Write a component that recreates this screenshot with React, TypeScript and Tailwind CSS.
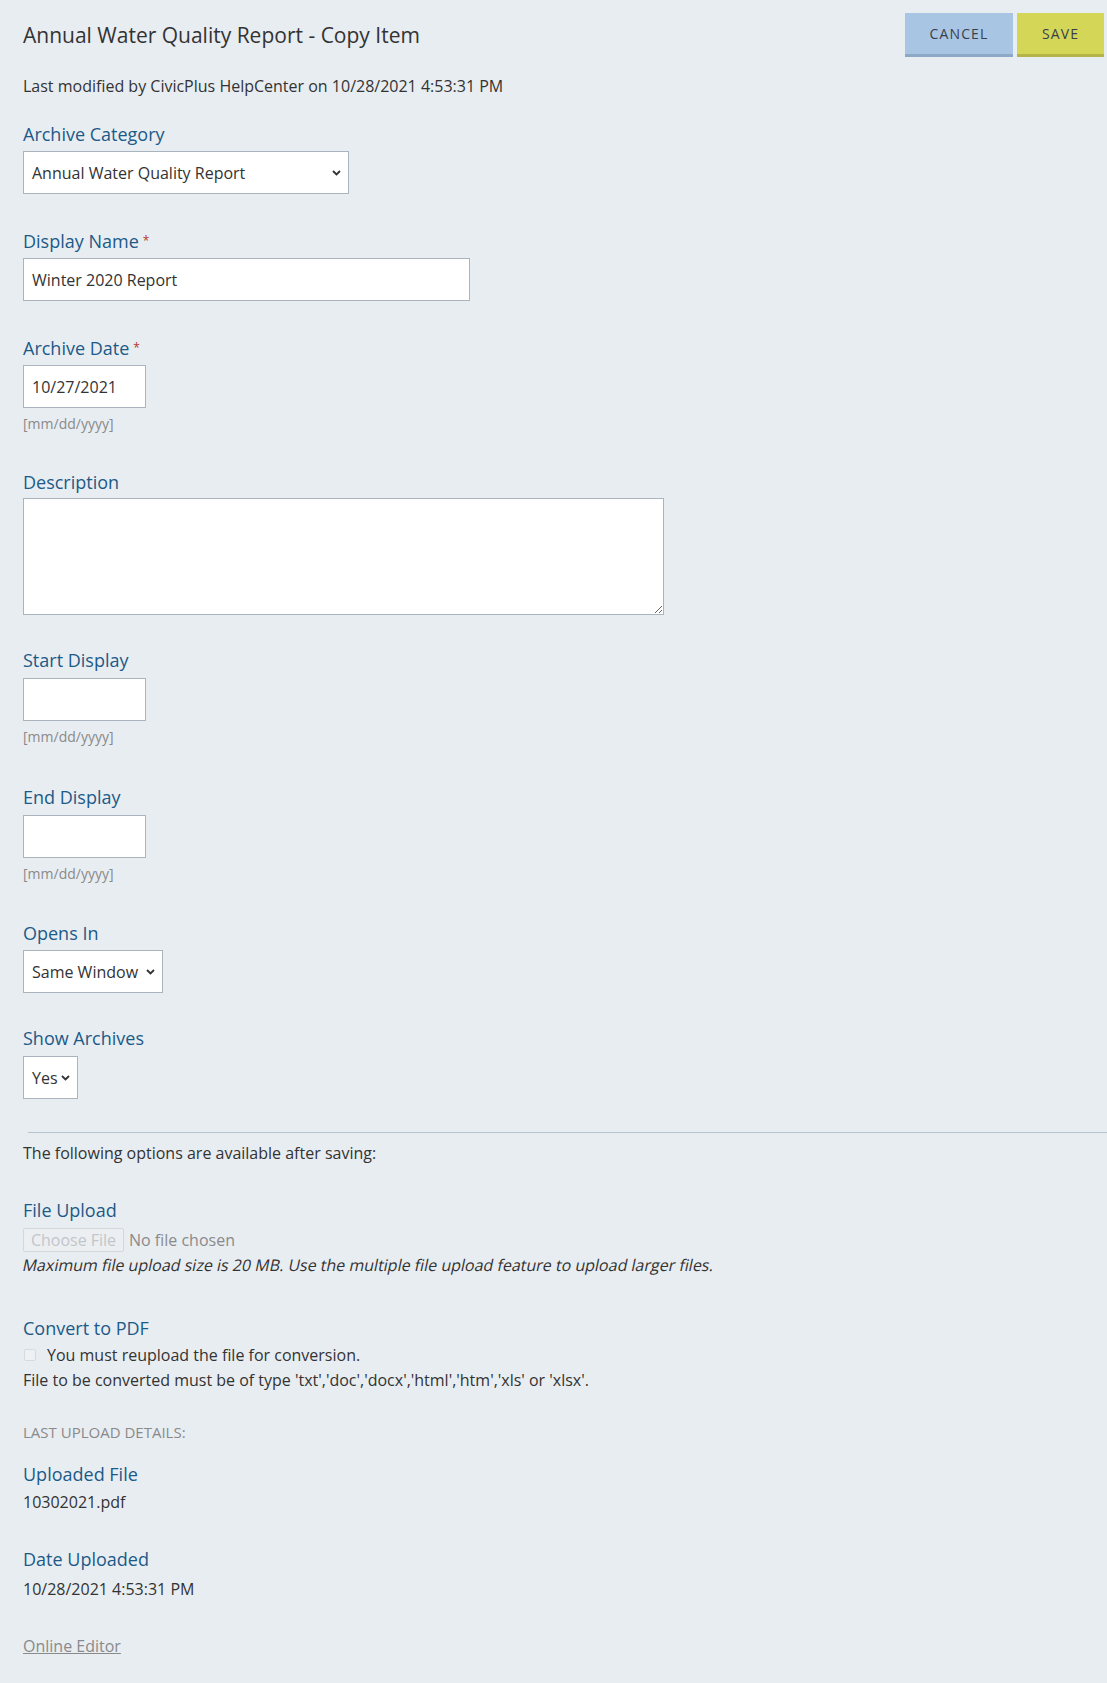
import type { ReactNode } from "react"

const font = { fontFamily: "'Open Sans', Lato, sans-serif" }

function Label({ children, required }: { children: ReactNode; required?: boolean }) {
  return (
    <div className="text-[18px] leading-[24px] text-[#1c5a87]">
      {children}
      {required && <span className="ml-[4px] align-top text-[12px] text-[#b5352f]">*</span>}
    </div>
  )
}

function Hint() {
  return <div className="mt-[6px] text-[14px] leading-[20px] text-[#8a8a8a]">[mm/dd/yyyy]</div>
}

function Chevron() {
  return (
    <svg
      className="pointer-events-none absolute right-[7px] top-1/2 -translate-y-1/2"
      width="9"
      height="6"
      viewBox="0 0 9 6"
      fill="none"
    >
      <path d="M1 1l3.5 3.5L8 1" stroke="#333" strokeWidth="1.8" />
    </svg>
  )
}

function Select({ value, width }: { value: string; width: string }) {
  return (
    <div className={`relative h-[43px] ${width} border border-[#aab4bf] bg-white`}>
      <div className="whitespace-nowrap pl-[8px] text-[16px] leading-[43px] text-[#333]">{value}</div>
      <Chevron />
    </div>
  )
}

function TextBox({ value, width }: { value?: string; width: string }) {
  return (
    <div className={`h-[43px] ${width} border border-[#aab4bf] bg-white pl-[8px] text-[16px] leading-[43px] text-[#333]`}>
      {value}
    </div>
  )
}

export default function App() {
  return (
    <div className="min-h-[1683px] bg-[#e8edf2] pb-[27px] text-[#333]" style={font}>
      <div className="flex items-center justify-between pl-[23px] pr-[3px] pt-[13px]">
        <h1 className="text-[21px] font-normal leading-[28px] text-[#333]">
          Annual Water Quality Report - Copy Item
        </h1>
        <div className="flex gap-[4px]">
          <button className="h-[44px] w-[108px] border-b-[3px] border-[#8ea9c6] bg-[#a8c5e3] text-[14px] tracking-[0.08em] text-[#3b3f4a]">
            CANCEL
          </button>
          <button className="h-[44px] w-[87px] border-b-[3px] border-[#b3b54a] bg-[#d4d658] text-[14px] tracking-[0.08em] text-[#3b3f4a]">
            SAVE
          </button>
        </div>
      </div>

      <div className="pl-[23px]">
        <p className="mt-[18px] text-[16px] leading-[22px]">
          Last modified by CivicPlus HelpCenter on 10/28/2021 4:53:31 PM
        </p>

        <div className="mt-[25px] flex flex-col gap-[5px]">
          <Label>Archive Category</Label>
          <Select value="Annual Water Quality Report" width="w-[326px]" />
        </div>

        <div className="mt-[35px] flex flex-col gap-[5px]">
          <Label required>Display Name</Label>
          <TextBox value="Winter 2020 Report" width="w-[447px]" />
        </div>

        <div className="mt-[35px]">
          <div className="flex flex-col gap-[5px]">
            <Label required>Archive Date</Label>
            <TextBox value="10/27/2021" width="w-[123px]" />
          </div>
          <Hint />
        </div>

        <div className="mt-[36px] flex flex-col gap-[4px]">
          <Label>Description</Label>
          <textarea className="h-[117px] w-[641px] resize-y border border-[#aab4bf] bg-white" />
        </div>

        <div className="mt-[33px]">
          <div className="flex flex-col gap-[6px]">
            <Label>Start Display</Label>
            <TextBox width="w-[123px]" />
          </div>
          <Hint />
        </div>

        <div className="mt-[38px]">
          <div className="flex flex-col gap-[6px]">
            <Label>End Display</Label>
            <TextBox width="w-[123px]" />
          </div>
          <Hint />
        </div>

        <div className="mt-[37px] flex flex-col gap-[5px]">
          <Label>Opens In</Label>
          <Select value="Same Window" width="w-[140px]" />
        </div>

        <div className="mt-[33px] flex flex-col gap-[6px]">
          <Label>Show Archives</Label>
          <Select value="Yes" width="w-[55px]" />
        </div>
      </div>

      <div className="ml-[28px] mt-[33px] h-px bg-[#b4c2d2]" />

      <div className="pl-[23px]">
        <p className="mt-[9px] text-[16px] leading-[22px]">
          The following options are available after saving:
        </p>

        <div className="mt-[34px] flex flex-col gap-[6px]">
          <Label>File Upload</Label>
          <div className="flex items-center gap-[5px]">
            <span className="flex h-[24px] w-[101px] items-center justify-center rounded-[2px] border border-[#d3d8de] bg-[#eceff2] text-[16px] text-[#c2c6cb]">
              Choose File
            </span>
            <span className="text-[16px] text-[#8a8a8a]">No file chosen</span>
          </div>
        </div>
        <p className="mt-[2px] text-[16px] leading-[22px]">
          <span className="inline-block -skew-x-12">
            Maximum file upload size is 20 MB. Use the multiple file upload feature to upload larger files.
          </span>
        </p>

        <div className="mt-[40px]">
          <Label>Convert to PDF</Label>
        </div>
        <div className="mt-[4px] flex items-center gap-[11px] text-[16px] leading-[22px]">
          <span className="ml-[1px] h-[12px] w-[12px] rounded-[2px] border border-[#d5dbe1] bg-[#eef1f4]" />
          <span>You must reupload the file for conversion.</span>
        </div>
        <p className="mt-[3px] text-[16px] leading-[22px]">
          File to be converted must be of type 'txt','doc','docx','html','htm','xls' or 'xlsx'.
        </p>

        <p className="mt-[31px] text-[15px] uppercase leading-[20px] text-[#8a8a8a]">Last Upload Details:</p>

        <div className="mt-[20px]">
          <Label>Uploaded File</Label>
        </div>
        <p className="mt-[5px] text-[16px] leading-[22px]">10302021.pdf</p>

        <div className="mt-[34px]">
          <Label>Date Uploaded</Label>
        </div>
        <p className="mt-[7px] text-[16px] leading-[22px]">10/28/2021 4:53:31 PM</p>

        <a className="mt-[35px] block w-fit text-[16px] leading-[22px] text-[#8a8a8a] underline">Online Editor</a>
      </div>
    </div>
  )
}
